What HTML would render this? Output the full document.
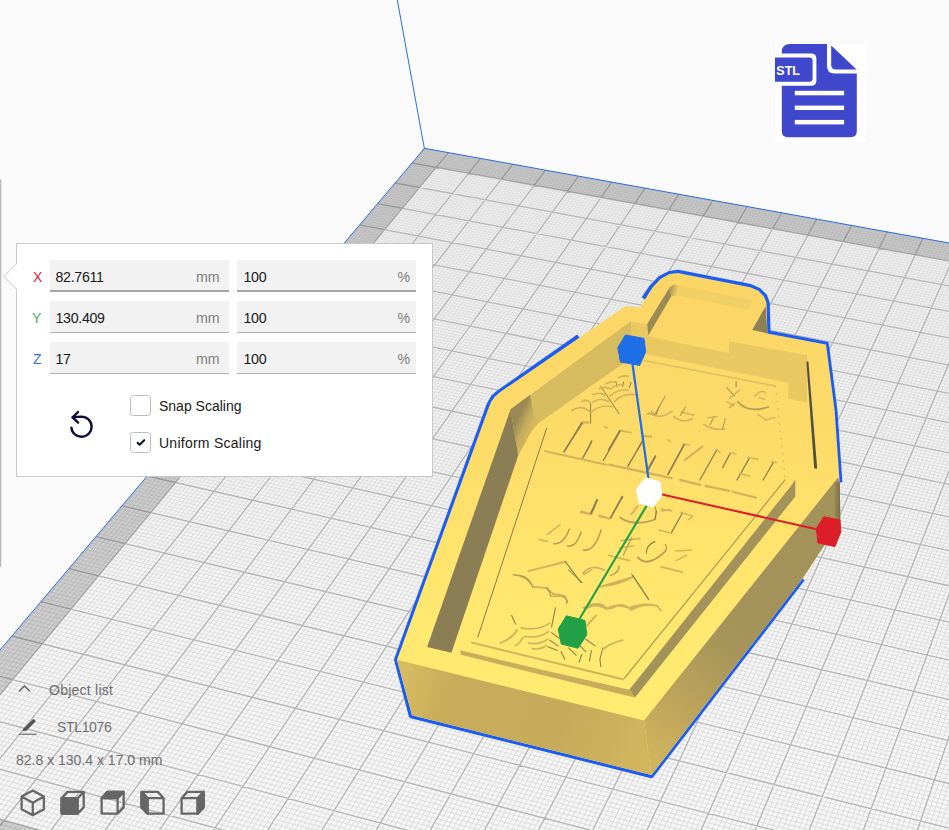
<!DOCTYPE html>
<html><head><meta charset="utf-8"><title>Cura</title>
<style>
html,body{margin:0;padding:0;}
body{width:949px;height:830px;overflow:hidden;background:#fafafa;position:relative;font-family:"Liberation Sans",sans-serif;}
#plate{position:absolute;left:0;top:0;}
.abs{position:absolute;}
#sliver{left:0;top:179px;width:1px;height:388px;background:#b9babc;border-top-right-radius:1px;}
#sliver2{left:1px;top:180px;width:1px;height:386px;background:#e6e7e8;}
#panel{left:16px;top:243px;width:415px;height:232px;background:#fff;border:1px solid #c8c8c8;}
#arrow{left:3px;top:263px;}
.inp{height:31px;width:179px;background:#f2f2f2;border-bottom:1px solid #b4b4b4;box-sizing:content-box;}
.inp.f{height:30px;border-bottom:2px solid #a6a6a6;}
.t{font-size:14.2px;letter-spacing:-0.3px;color:#191919;line-height:16px;white-space:nowrap;}
.u{font-size:14.2px;color:#7d7d7d;line-height:16px;white-space:nowrap;}
.ax{font-size:14px;line-height:16px;}
.cb{width:19px;height:19px;border:1px solid #bcbcbc;border-radius:3.5px;background:#fff;}
.lb{font-size:14px;color:#191919;line-height:16px;white-space:nowrap;}
.ol{font-size:14px;color:#6e6e6e;line-height:16px;white-space:nowrap;}

</style></head><body>
<svg id="plate" width="949" height="830" viewBox="0 0 949 830">
<defs><linearGradient id="gMin" gradientUnits="userSpaceOnUse" x1="0" y1="150" x2="0" y2="830"><stop offset="0" stop-color="#dadada"/><stop offset="1" stop-color="#cecece"/></linearGradient><linearGradient id="gPl" gradientUnits="userSpaceOnUse" x1="0" y1="150" x2="0" y2="720"><stop offset="0" stop-color="#ececec"/><stop offset="1" stop-color="#f6f6f6"/></linearGradient></defs>
<polygon points="424.5,148.3 1249.1,297.2 1041.9,1154.4 -141.8,817.7" fill="url(#gPl)"/>
<path d="M426.1 148.6L-5.2 659.1M423.7 149.2L954.0 245.1M429.3 149.1L-8.2 668.6M422.0 151.2L957.3 248.1M432.5 149.7L-7.7 673.9M420.4 153.1L956.3 250.3M435.6 150.3L-7.1 679.3M418.7 155.1L955.4 252.5M438.8 150.9L-6.6 684.7M417.1 157.0L954.4 254.8M442.0 151.4L-6.0 690.1M415.4 159.0L957.7 257.8M445.2 152.0L-5.5 695.5M413.7 161.0L956.7 260.1M451.6 153.2L-8.0 710.9M410.4 164.9L954.7 264.6M454.8 153.8L-7.5 716.5M408.7 166.9L958.0 267.6M458.0 154.3L-6.9 722.1M407.0 168.9L957.0 269.9M461.2 154.9L-6.4 727.7M405.3 170.9L956.1 272.2M464.5 155.5L-5.8 733.4M403.6 172.9L955.1 274.5M467.7 156.1L-5.3 739.0M401.9 174.9L954.1 276.8M470.9 156.7L-8.4 749.4M400.2 176.9L957.4 279.9M474.1 157.2L-7.9 755.1M398.5 179.0L956.4 282.2M477.3 157.8L-7.3 760.9M396.8 181.0L955.4 284.5M483.8 159.0L-6.2 772.7M393.4 185.0L957.8 290.0M487.0 159.6L-5.6 778.6M391.7 187.1L956.8 292.3M490.2 160.1L-5.0 784.5M389.9 189.1L955.8 294.7M493.5 160.7L-8.2 795.3M388.2 191.2L954.7 297.0M496.7 161.3L-7.7 801.3M386.4 193.2L958.1 300.2M500.0 161.9L-7.1 807.4M384.7 195.3L957.1 302.6M503.2 162.5L-6.5 813.5M382.9 197.4L956.1 305.0M506.4 163.1L-5.9 819.7M381.2 199.5L955.1 307.4M509.7 163.7L-5.4 825.9M379.4 201.5L954.1 309.8M516.2 164.8L-4.2 838.4M375.9 205.7L956.5 315.4M519.4 165.4L0.3 839.6M374.1 207.8L955.4 317.9M522.7 166.0L8.6 835.9M372.3 209.9L954.4 320.3M526.0 166.6L13.1 837.1M370.5 212.0L957.9 323.6M529.2 167.2L17.6 838.4M368.8 214.2L956.8 326.0M532.5 167.8L22.0 839.6M367.0 216.3L955.8 328.5M535.8 168.4L30.3 835.9M365.2 218.4L954.8 330.9M539.0 169.0L34.8 837.1M363.3 220.6L958.2 334.3M542.3 169.6L39.3 838.4M361.5 222.7L957.2 336.7M548.9 170.7L52.1 835.9M357.9 227.0L955.1 341.7M552.1 171.3L56.6 837.2M356.1 229.2L954.1 344.2M555.4 171.9L61.1 838.4M354.2 231.3L957.6 347.6M558.7 172.5L65.6 839.7M352.4 233.5L956.5 350.1M562.0 173.1L73.8 835.9M350.5 235.7L955.5 352.6M565.3 173.7L78.3 837.2M348.7 237.9L954.4 355.2M568.6 174.3L82.8 838.4M346.8 240.1L958.0 358.6M571.9 174.9L87.3 839.7M345.0 242.3L956.9 361.2M575.2 175.5L95.5 836.0M343.1 244.5L955.9 363.7M581.8 176.7L104.6 838.5M339.4 248.9L958.3 369.8M585.1 177.3L109.1 839.7M337.5 251.1L957.3 372.4M588.4 177.9L117.2 836.0M335.6 253.3L956.2 375.0M591.7 178.5L121.8 837.2M333.7 255.6L955.2 377.6M595.1 179.1L126.3 838.5M331.8 257.8L954.1 380.2M598.4 179.7L130.9 839.8M329.9 260.1L957.7 383.7M601.7 180.3L139.0 836.0M328.0 262.3L956.6 386.3M605.0 180.9L143.5 837.3M326.1 264.6L955.5 389.0M608.3 181.5L148.1 838.5M324.2 266.9L954.5 391.6M615.0 182.7L160.7 836.0M320.3 271.4L957.0 397.9M618.3 183.3L165.2 837.3M318.4 273.7L955.9 400.6M621.7 183.9L169.8 838.5M316.4 276.0L954.8 403.3M625.0 184.5L174.4 839.8M314.5 278.3L958.5 406.9M628.4 185.1L182.4 836.0M312.5 280.6L957.4 409.6M631.7 185.7L187.0 837.3M310.6 283.0L956.3 412.3M635.1 186.3L191.6 838.6M308.6 285.3L955.2 415.0M638.4 186.9L196.1 839.8M306.6 287.6L954.1 417.8M641.8 187.5L204.1 836.1M304.6 290.0L957.8 421.5M648.5 188.7L213.3 838.6M300.7 294.6L955.6 427.0M651.9 189.3L217.9 839.8M298.7 297.0L954.5 429.8M655.2 190.0L225.8 836.1M296.7 299.4L958.2 433.5M658.6 190.6L230.4 837.4M294.7 301.8L957.1 436.3M662.0 191.2L235.0 838.6M292.6 304.1L956.0 439.1M665.3 191.8L239.7 839.9M290.6 306.5L954.9 441.9M668.7 192.4L247.6 836.1M288.6 308.9L958.6 445.7M672.1 193.0L252.2 837.4M286.6 311.3L957.5 448.5M675.5 193.6L256.8 838.6M284.5 313.7L956.4 451.4M682.2 194.8L269.3 836.1M280.4 318.6L954.1 457.1M685.6 195.4L273.9 837.4M278.4 321.0L957.9 461.0M689.0 196.1L278.5 838.7M276.3 323.4L956.8 463.9M692.4 196.7L283.2 839.9M274.2 325.9L955.6 466.8M695.8 197.3L291.0 836.2M272.1 328.3L954.5 469.7M699.2 197.9L295.6 837.4M270.1 330.8L958.3 473.6M702.6 198.5L300.3 838.7M268.0 333.3L957.2 476.5M706.0 199.1L304.9 839.9M265.9 335.8L956.0 479.4M709.4 199.7L312.7 836.2M263.8 338.2L954.9 482.4M716.3 201.0L322.0 838.7M259.6 343.2L957.6 489.3M719.7 201.6L326.7 840.0M257.4 345.7L956.4 492.3M723.1 202.2L334.4 836.2M255.3 348.3L955.3 495.3M726.5 202.8L339.1 837.5M253.2 350.8L954.1 498.3M730.0 203.5L343.8 838.7M251.0 353.3L958.0 502.4M733.4 204.1L348.4 840.0M248.9 355.9L956.8 505.4M736.8 204.7L356.1 836.2M246.7 358.4L955.7 508.4M740.3 205.3L360.8 837.5M244.6 361.0L954.5 511.5M743.7 205.9L365.5 838.8M242.4 363.5L958.4 515.6M750.6 207.2L377.9 836.3M238.0 368.7L956.1 521.7M754.0 207.8L382.5 837.5M235.8 371.3L954.9 524.8M757.5 208.4L387.2 838.8M233.6 373.9L958.8 529.0M760.9 209.0L394.9 835.0M231.4 376.5L957.7 532.1M764.4 209.7L399.6 836.3M229.2 379.1L956.5 535.2M767.9 210.3L404.3 837.5M227.0 381.7L955.3 538.4M771.3 210.9L409.0 838.8M224.8 384.3L954.2 541.5M774.8 211.5L416.6 835.0M222.6 387.0L958.1 545.8M778.2 212.2L421.3 836.3M220.3 389.6L956.9 549.0M785.2 213.4L430.7 838.8M215.8 394.9L954.6 555.3M788.7 214.1L438.3 835.1M213.6 397.6L958.5 559.7M792.1 214.7L443.0 836.3M211.3 400.3L957.3 562.9M795.6 215.3L447.7 837.6M209.0 403.0L956.2 566.1M799.1 215.9L452.5 838.8M206.7 405.7L955.0 569.4M802.6 216.6L460.0 835.1M204.4 408.4L959.0 573.7M806.1 217.2L464.7 836.4M202.2 411.1L957.8 577.0M809.6 217.8L469.5 837.6M199.8 413.8L956.6 580.3M813.1 218.5L474.2 838.9M197.5 416.5L955.4 583.6M820.1 219.7L486.4 836.4M192.9 422.0L958.2 591.4M823.6 220.4L491.2 837.6M190.6 424.8L957.0 594.7M827.1 221.0L495.9 838.9M188.2 427.6L955.8 598.0M830.6 221.6L503.4 835.1M185.9 430.3L954.6 601.4M834.1 222.3L508.1 836.4M183.5 433.1L958.6 605.9M837.6 222.9L512.9 837.7M181.1 435.9L957.4 609.3M841.1 223.5L517.7 838.9M178.8 438.7L956.2 612.7M844.7 224.2L525.1 835.2M176.4 441.5L955.0 616.1M848.2 224.8L529.9 836.4M174.0 444.4L959.1 620.8M855.3 226.1L539.4 838.9M169.2 450.0L956.7 627.6M858.8 226.7L546.8 835.2M166.8 452.9L955.4 631.1M862.3 227.4L551.6 836.4M164.4 455.7L954.2 634.6M865.9 228.0L556.4 837.7M161.9 458.6L958.3 639.3M869.4 228.6L561.2 839.0M159.5 461.5L957.1 642.8M873.0 229.3L568.5 835.2M157.1 464.4L955.9 646.3M876.5 229.9L573.3 836.5M154.6 467.3L954.6 649.8M880.1 230.6L578.1 837.7M152.2 470.2L958.8 654.6M883.6 231.2L582.9 839.0M149.7 473.1L957.5 658.2M890.7 232.5L595.0 836.5M144.7 479.0L955.0 665.4M894.3 233.1L599.8 837.8M142.2 481.9L959.2 670.2M897.9 233.8L604.6 839.0M139.7 484.9L958.0 673.8M901.4 234.4L611.9 835.3M137.2 487.8L956.7 677.5M905.0 235.1L616.7 836.5M134.7 490.8L955.5 681.1M908.6 235.7L621.5 837.8M132.2 493.8L954.2 684.8M912.2 236.4L626.4 839.0M129.6 496.8L958.5 689.7M915.7 237.0L633.6 835.3M127.1 499.8L957.2 693.4M919.3 237.7L638.4 836.5M124.5 502.8L955.9 697.1M926.5 239.0L648.1 839.1M119.4 508.9L958.9 705.9M930.1 239.6L655.3 835.3M116.8 511.9L957.6 709.6M933.7 240.3L660.1 836.6M114.2 515.0L956.4 713.4M937.3 240.9L665.0 837.8M111.6 518.1L955.1 717.2M940.9 241.6L669.8 839.1M109.0 521.1L959.4 722.3M944.5 242.2L677.0 835.3M106.4 524.2L958.1 726.1M948.1 242.9L681.8 836.6M103.8 527.3L956.8 730.0M951.7 243.5L686.7 837.8M101.2 530.4L955.5 733.8M954.2 246.8L691.6 839.1M98.5 533.6L954.2 737.7M954.5 263.9L703.5 836.6M93.2 539.8L957.3 746.8M954.7 272.6L708.4 837.9M90.5 543.0L956.0 750.7M954.9 281.4L713.3 839.1M87.9 546.2L954.7 754.6M955.0 290.2L720.4 835.4M85.2 549.3L959.1 760.0M954.0 302.0L725.2 836.6M82.5 552.5L957.8 763.9M954.2 311.2L730.1 837.9M79.8 555.7L956.5 767.9M954.4 320.4L735.0 839.2M77.1 558.9L955.1 771.9M954.5 329.8L742.1 835.4M74.3 562.2L959.6 777.3M954.7 339.2L747.0 836.7M71.6 565.4L958.2 781.3M955.1 358.5L756.8 839.2M66.1 571.9L955.6 789.4M954.0 371.3L763.7 835.4M63.3 575.2L954.3 793.5M954.2 381.3L768.7 836.7M60.6 578.5L958.7 799.0M954.4 391.3L773.6 837.9M57.8 581.7L957.4 803.1M954.6 401.5L778.5 839.2M55.0 585.0L956.1 807.3M954.7 411.9L785.4 835.5M52.2 588.4L954.7 811.4M954.9 422.3L790.4 836.7M49.4 591.7L959.2 817.0M955.1 432.9L795.3 838.0M46.5 595.0L957.9 821.2M954.0 446.9L800.2 839.2M43.7 598.4L956.5 825.4M954.4 468.8L812.1 836.7M38.0 605.1L959.7 835.4M954.6 480.0L817.0 838.0M35.1 608.5L940.7 835.2M954.8 491.3L822.0 839.2M32.3 611.9L921.6 835.0M955.0 502.8L828.8 835.5M29.4 615.3L908.4 836.3M955.2 514.4L833.8 836.8M26.5 618.7L889.4 836.2M955.4 526.2L838.7 838.0M23.6 622.2L870.3 836.0M954.2 541.8L843.7 839.3M20.7 625.6L851.2 835.8M954.4 553.9L850.5 835.5M17.7 629.1L832.2 835.6M954.6 566.2L855.5 836.8M14.8 632.5L813.1 835.5M955.0 591.3L865.4 839.3M8.9 639.5L775.0 835.1M955.2 604.1L872.2 835.5M5.9 643.0L761.7 836.4M955.4 617.1L877.2 836.8M2.9 646.6L742.6 836.3M954.2 634.3L882.2 838.1M-0.1 650.1L723.6 836.1M954.4 647.7L887.2 839.3M-3.1 653.7L704.5 835.9M954.6 661.3L893.9 835.6M-6.1 657.2L685.5 835.7M954.8 675.1L898.9 836.8M-9.1 660.8L666.4 835.6M955.0 689.0L903.9 838.1M-7.3 665.6L647.4 835.4M955.2 703.2L908.9 839.3M-5.5 670.5L628.3 835.2M954.2 736.7L920.6 836.8M-6.8 679.0L595.9 836.4M954.4 751.6L925.6 838.1M-9.9 682.7L576.8 836.2M954.6 766.7L930.6 839.4M-8.1 687.6L557.8 836.0M954.8 782.0L937.3 835.6M-6.2 692.6L538.7 835.8M955.1 797.6L942.3 836.9M-9.3 696.3L519.7 835.7M955.3 813.4L947.3 838.1M-7.5 701.3L500.6 835.5M955.5 829.4L952.3 839.4M-5.7 706.4L481.6 835.3M-8.8 710.1L462.5 835.2M-7.0 715.2L449.0 836.5M-8.3 724.2L410.9 836.1M-6.4 729.3L391.9 835.9M-9.6 733.2L372.8 835.8M-7.7 738.4L353.8 835.6M-5.9 743.6L334.8 835.4M-9.0 747.5L315.7 835.3M-7.2 752.8L296.7 835.1M-5.3 758.1L283.1 836.4M-8.5 762.1L264.1 836.2M-9.8 771.4L226.0 835.9M-7.9 776.8L206.9 835.7M-6.0 782.3L187.9 835.5M-9.2 786.3L168.9 835.4M-7.3 791.8L149.8 835.2M-5.4 797.3L130.8 835.0M-8.7 801.4L117.1 836.3M-6.8 807.0L98.1 836.2M-10.0 811.2L79.0 836.0M-6.2 822.4L41.0 835.6M-9.5 826.6L22.0 835.5M-7.6 832.3L2.9 835.3" stroke="url(#gMin)" stroke-width="0.6" fill="none"/>
<path d="M448.4 152.6L-8.6 705.4M412.1 163.0L955.7 262.3M480.5 158.4L-6.7 766.8M395.1 183.0L954.4 286.8M512.9 164.2L-8.7 837.1M377.7 203.6L957.5 313.0M545.6 170.1L43.8 839.7M359.7 224.8L956.2 339.2M578.5 176.1L100.0 837.2M341.2 246.7L954.8 366.3M611.7 182.1L152.6 839.8M322.2 269.1L958.1 395.2M645.1 188.1L208.7 837.3M302.6 292.3L956.7 424.2M678.9 194.2L261.4 839.9M282.5 316.1L955.2 454.2M712.9 200.4L317.4 837.4M261.7 340.7L958.7 486.4M747.1 206.6L373.2 835.0M240.2 366.1L957.2 518.7M781.7 212.8L426.0 837.6M218.1 392.3L955.7 552.1M816.6 219.1L481.7 835.1M195.2 419.3L954.2 586.9M851.7 225.4L534.6 837.7M171.6 447.2L957.9 624.2M887.2 231.8L590.2 835.2M147.2 476.0L956.3 661.8M922.9 238.3L643.3 837.8M122.0 505.9L954.7 700.9M954.4 255.3L698.7 835.4M95.9 536.7L958.6 742.9M954.9 348.8L751.9 837.9M68.9 568.6L956.9 785.4M954.2 457.8L807.1 835.5M40.9 601.7L955.2 829.7M954.8 578.7L860.5 838.0M11.8 636.0L794.0 835.3M955.5 717.6L915.6 835.6M-8.6 674.1L609.3 835.1M-5.1 720.4L430.0 836.3M-6.6 767.4L245.0 836.1M-8.1 816.8L60.0 835.8" stroke="#b4b4b4" stroke-width="1.3" fill="none"/>
<path d="M424.5,148.3L1249.1,297.2L1041.9,1154.4L-141.8,817.7Z M436.2,167.4L1215.5,309.8L1009.1,1100.9L-83.3,795.8Z" fill="#000" fill-opacity="0.16" fill-rule="evenodd"/>
<polygon points="424.5,148.3 1249.1,297.2 1041.9,1154.4 -141.8,817.7" fill="none" stroke="#2a6ce2" stroke-width="1"/>
<path d="M397.3 0L424.4 148.6" stroke="#2a6ce2" stroke-width="1"/>
<defs>
<linearGradient id="gTop" gradientUnits="userSpaceOnUse" x1="0" y1="280" x2="0" y2="720"><stop offset="0" stop-color="#fbd566"/><stop offset="0.35" stop-color="#fddb69"/><stop offset="0.7" stop-color="#ffe76f"/><stop offset="1" stop-color="#ffec73"/></linearGradient>
<linearGradient id="gFront" gradientUnits="userSpaceOnUse" x1="400" y1="680" x2="650" y2="760"><stop offset="0" stop-color="#d8bc61"/><stop offset="0.2" stop-color="#c7ac5b"/><stop offset="0.65" stop-color="#c6ab5b"/><stop offset="1" stop-color="#d2b65f"/></linearGradient>
<linearGradient id="gRight" gradientUnits="userSpaceOnUse" x1="648" y1="750" x2="760" y2="605"><stop offset="0" stop-color="#cfb35e"/><stop offset="0.25" stop-color="#bfa65a"/><stop offset="0.7" stop-color="#a7955a"/><stop offset="1" stop-color="#a39259"/></linearGradient>
<linearGradient id="gTL" gradientUnits="userSpaceOnUse" x1="513" y1="428" x2="530" y2="436"><stop offset="0" stop-color="#9a8956"/><stop offset="0.5" stop-color="#c4aa5b"/><stop offset="1" stop-color="#d7bb5f"/></linearGradient>
<linearGradient id="gTabL" gradientUnits="userSpaceOnUse" x1="668" y1="290" x2="678" y2="292"><stop offset="0" stop-color="#9c8a55"/><stop offset="1" stop-color="#f3d166"/></linearGradient>
<linearGradient id="gEdge" gradientUnits="userSpaceOnUse" x1="833" y1="0" x2="840.5" y2="0"><stop offset="0" stop-color="#a39259"/><stop offset="1" stop-color="#776c46"/></linearGradient>
</defs>
<polyline points="578.5,336.2 500.0,391.2 493.0,397.0 489.0,404.0 487.6,408.0 396.2,659.7 411.0,716.0 651.5,776.0 803.0,579.0" fill="none" stroke="#1a5cf5" stroke-width="4.4" stroke-linejoin="round"/>
<polyline points="643.5,298.5 651.5,286.8 660.0,278.0 669.5,273.2 678.0,272.0 750.5,286.2 759.0,290.0 765.0,296.0 767.5,303.0 768.4,332.6 826.6,343.8 835.2,410.0 840.2,482.5" fill="none" stroke="#1a5cf5" stroke-width="4.4" stroke-linejoin="round"/>
<polygon points="397.0,659.7 488.8,407.5 491.0,402.0 495.0,396.5 500.6,391.7 625.5,306.1 640.1,307.7 644.5,300.1 652.5,287.5 660.5,279.0 669.4,274.1 677.7,272.9 750.3,287.2 758.5,290.8 764.0,296.5 766.5,303.0 767.4,333.4 826.0,344.6 834.6,410.0 839.6,481.8 840.3,521.0 802.3,579.1 651.5,775.0 412.0,715.3" fill="url(#gTop)" />
<polygon points="397.0,659.7 644.0,720.5 651.5,775.0 412.0,715.3" fill="url(#gFront)" />
<polygon points="644.0,720.5 838.0,477.5 839.8,481.8 840.3,521.0 802.3,579.1 651.5,775.0" fill="url(#gRight)" />
<polygon points="834.0,482.5 839.8,481.8 840.3,521.0 836.5,527.0 834.5,515.0" fill="url(#gEdge)" />
<polygon points="765.6,306.3 752.2,329.9 767.4,333.4" fill="#8f8053" />
<polygon points="510.6,409.3 630.9,321.3 632.0,360.0 620.6,365.2 538.4,423.2 531.3,431.8 518.2,455.6" fill="#d7bb5f" />
<polygon points="510.6,409.3 530.0,395.0 536.0,425.0 531.3,431.8 518.2,455.6" fill="url(#gTL)" />
<polygon points="510.6,409.3 518.2,455.6 451.4,652.7 427.1,646.9" fill="#8b7e54" />
<polygon points="630.9,321.3 647.9,324.5 647.9,336.3 729.1,353.2 729.1,341.2 807.0,355.3 807.0,402.7 788.1,398.5 788.1,382.7 646.1,354.1 632.0,352.0" fill="#e9c862" />
<polygon points="647.2,324.0 669.4,287.7 672.1,285.5 671.6,295.8 648.3,335.4" fill="#9c8a55" />
<polygon points="669.4,287.7 674.0,284.6 752.0,300.3 749.6,306.5 747.0,309.5 678.0,295.5 671.6,296.0" fill="#f0cf65" />
<polygon points="669.4,287.7 674.0,284.6 679.0,285.6 678.0,295.5 671.6,296.0" fill="url(#gTabL)" />
<polygon points="806.4,361.6 808.4,361.6 817.2,468.6 814.2,468.6" fill="#54503f" />
<polygon points="795.3,479.6 795.3,496.5 635.0,697.4 629.3,689.8 791.9,484.7" fill="#a39259" />
<polygon points="460.2,650.3 530.0,667.1 629.3,689.8 635.0,697.4 629.3,696.2 530.0,672.1 460.9,654.8" fill="#c9ad5b" />
<polygon points="471.0,641.5 624.2,678.5 623.5,680.6 471.5,643.6" fill="#d0b45e" />
<polyline points="546.8,427.8 477.6,637.7" fill="none" stroke="#8a7a4a" stroke-width="1" />
<polyline points="643.6,360.5 775.4,385.9" fill="none" stroke="#dcc062" stroke-width="1.6" />
<polyline points="775.4,385.9 785.2,479.6" fill="none" stroke="#c9ad5b" stroke-width="1" stroke-dasharray="1.5 6"/>
<polyline points="785.2,479.6 624.2,678.5" fill="none" stroke="#b39c55" stroke-width="1.2" />
<path d="M590.6 402.9L590.6 423.1M600.7 386.4L619.0 413.6M615.9 381.4L617.1 386.4M623.5 382.0L622.8 386.4M631.0 382.6L629.2 387.7M651.3 411.7L655.7 415.5L660.0 405.4M736.1 381.7L736.1 386.7" fill="none" stroke="#8f7f50" stroke-width="1" stroke-linecap="round"/>
<path d="M571.6 410.5Q581.7 404.1 589.9 411.7M591.8 411.7Q600.7 404.1 612.1 406.7M581.7 401.6Q586.8 398.5 590.6 402.9M592.5 402.2Q599.4 397.2 608.9 401.6M614.6 401.6Q622.2 392.8 636.1 394.7M593.1 394.7Q599.4 391.5 605.8 395.3M610.2 395.9Q617.1 389.0 628.5 390.2M599.4 389.0Q604.5 385.8 610.8 389.0M610.8 389.0Q615.9 383.9 623.5 384.5M605.8 383.9Q610.8 380.7 615.9 382.6M618.4 377.6Q623.5 375.1 628.5 376.3M581.7 422.1L588.1 423.1M619.7 430.4L627.3 432.0M643.7 436.4L651.3 436.4M648.4 412.9Q660.2 420.5 672.0 411.2M673.7 416.3Q682.2 423.8 692.3 418.8M704.1 424.7Q714.2 430.6 724.3 428.9M580.6 512.4L590.7 514.4M599.1 516.5L609.3 518.7M581.1 511.1L591.7 514.2M599.0 515.3L610.6 518.5M659.1 530.0L671.7 533.2M621.2 540.6L640.1 538.5M619.1 548.0L633.8 545.8M608.5 555.3L629.6 560.6M532.6 586.9L547.4 588.0M657.0 605.9L660.8 610.5" fill="none" stroke="#d2b35d" stroke-width="1.6" stroke-linecap="round"/>
<path d="M581.7 422.5L565.3 450.0M619.7 430.7L608.3 450.0M591.8 440.8L587.4 450.0M642.4 440.8L637.4 450.0M655.2 455.9L646.7 471.1M683.8 444.9L667.8 474.4M716.7 450.0L699.9 480.0M730.2 453.4L722.6 467.7M749.6 457.6L737.0 480.0M773.2 462.6L763.1 480.0M597.5 500.1L591.6 513.6M622.7 496.7L610.9 517.8M596.9 499.5L590.6 513.2M622.2 496.3L610.6 517.4M682.3 513.2L671.7 532.1" fill="none" stroke="#8f7f50" stroke-width="1.3" stroke-linecap="round"/>
<path d="M647.5 414.3L653.8 413.0M754.7 396.0Q760.6 389.3 765.6 392.6M731.1 452.5L736.1 454.2M680.2 512.1L692.8 516.3L688.6 519.5" fill="none" stroke="#d2b35d" stroke-width="1.4" stroke-linecap="round"/>
<path d="M665.3 396.0L655.2 413.7M654.9 519.5Q657.4 512.1 654.9 506.9M665.4 551.1Q667.5 547.3 665.4 544.4M547.4 588.0Q551.6 595.4 560.0 594.3M568.6 570.0L581.9 582.3" fill="none" stroke="#b89f57" stroke-width="1.3" stroke-linecap="round"/>
<path d="M681.3 412.0L694.0 415.4M707.5 417.9L717.6 416.3M726.8 401.9L733.6 405.3M758.0 414.6L764.8 418.8M764.8 420.1L774.9 417.4M604.2 426.7L607.6 428.1M668.3 439.9L670.8 441.9" fill="none" stroke="#d2b35d" stroke-width="1.3" stroke-linecap="round"/>
<path d="M685.5 407.0L680.5 415.4M725.2 418.8L722.6 428.9M714.2 416.3L710.0 424.7M726.8 387.6L734.4 396.0M631.7 537.4L623.3 555.3M564.3 595.4Q567.6 599.6 566.4 603.8" fill="none" stroke="#b89f57" stroke-width="1.2" stroke-linecap="round"/>
<path d="M739.5 390.1L729.4 398.5M683.0 444.1L689.7 444.9M715.9 449.1L720.1 452.5M747.9 457.6L758.0 459.3M771.5 461.8L776.6 462.6M739.5 473.6L749.6 476.1M582.3 422.5L589.0 421.7M621.1 431.0L631.2 432.6M644.7 436.0L651.4 436.9M661.5 511.1L670.0 509.4M661.2 509.0L671.7 511.1M539.0 539.5L547.4 541.6M547.4 534.3L560.0 524.8M676.0 551.1L691.8 550.1M686.5 555.3L676.0 560.6M552.7 594.3L564.3 595.4M532.6 586.7L545.9 588.0M550.6 596.2L562.9 596.6M583.8 574.7L591.4 570.0" fill="none" stroke="#d2b35d" stroke-width="1.5" stroke-linecap="round"/>
<path d="M729.4 407.8L734.4 403.6" fill="none" stroke="#b89f57" stroke-width="1.1" stroke-linecap="round"/>
<path d="M737.8 401.9Q747.9 413.7 768.2 407.0M620.1 517.4Q633.8 526.9 654.9 519.5" fill="none" stroke="#b89f57" stroke-width="1.8" stroke-linecap="round"/>
<path d="M758.9 397.7L764.8 399.4" fill="none" stroke="#d2b35d" stroke-width="1.2" stroke-linecap="round"/>
<path d="M702.4 446.6L684.7 460.1M528.4 571.1L565.3 561.7M600.1 586.9L631.7 577.5M587.4 608.0Q595.9 602.3 606.4 609.1Q615.9 602.3 629.6 608.0Q642.2 602.3 657.0 605.9M585.7 626.9L596.1 615.5M583.8 607.9Q593.3 601.9 602.8 605.1M602.8 605.1Q608.5 610.8 614.2 607.0M614.2 607.0Q621.7 601.9 631.2 609.8M631.2 609.8Q640.7 604.1 650.0 605.1M602.8 586.1Q621.7 583.7 633.1 576.6" fill="none" stroke="#d2b35d" stroke-width="2" stroke-linecap="round"/>
<path d="M582.3 423.4L563.7 452.0M591.6 441.9L582.3 458.8M620.2 431.0L603.4 460.5M642.1 441.9L627.8 466.4M655.6 456.3L648.0 470.6M684.3 444.5L668.3 474.0" fill="none" stroke="#8f7f50" stroke-width="1.4" stroke-linecap="round"/>
<path d="M545.2 451.2L606.7 464.7M609.3 464.7L671.7 478.2M680.1 479.9L700.3 484.9M705.4 485.8L729.0 490.8M732.4 491.7L756.0 497.6" fill="none" stroke="#d2b35d" stroke-width="2.2" stroke-linecap="round"/>
<path d="M637.9 506.0L631.2 514.4M661.2 566.9L682.3 572.2M583.2 573.2Q591.7 563.3 604.3 570.1" fill="none" stroke="#d2b35d" stroke-width="1.8" stroke-linecap="round"/>
<path d="M656.5 511.1L654.8 519.5M646.4 553.2Q646.0 545.2 654.9 541.6" fill="none" stroke="#8f7f50" stroke-width="1.2" stroke-linecap="round"/>
<path d="M553.7 543.7Q563.2 545.2 569.5 529.0M567.4 545.8Q575.8 548.4 581.1 532.1M583.2 550.1Q594.8 551.5 601.1 530.0M520.0 575.4Q528.9 576.4 532.6 586.9M610.6 575.4Q619.1 572.6 619.1 565.9M513.6 574.7Q526.9 575.7 532.6 586.1M545.9 588.0Q550.0 590.9 550.6 595.6" fill="none" stroke="#b89f57" stroke-width="1.5" stroke-linecap="round"/>
<path d="M638.0 557.4Q647.5 568.4 665.4 551.1" fill="none" stroke="#b89f57" stroke-width="2" stroke-linecap="round"/>
<path d="M565.3 561.7L581.1 582.7M631.7 574.3L648.6 599.6M511.7 615.5L515.5 624.1M555.4 607.9L551.6 626.9M551.6 632.6L559.2 638.3M549.7 640.2L558.2 645.9M547.8 646.8L557.3 650.6M561.0 651.6L564.8 659.2M568.6 647.8L576.2 655.4M580.0 645.9L585.7 651.6M581.9 654.4L579.1 662.0M591.4 650.6L589.5 661.0M602.8 647.8L599.9 659.2L600.9 666.7M585.7 639.2L595.2 645.9M633.1 575.7L648.3 598.5" fill="none" stroke="#8f7f50" stroke-width="1.1" stroke-linecap="round"/>
<path d="M562.9 596.6Q567.1 598.5 567.7 602.2" fill="none" stroke="#b89f57" stroke-width="1.4" stroke-linecap="round"/>
<path d="M521.2 627.9Q538.3 631.1 549.7 623.1M525.0 636.4Q538.3 638.7 548.7 631.6M528.8 643.0Q538.3 645.3 547.8 639.2M532.6 648.7Q540.2 650.0 545.9 645.9M500.3 643.0Q512.1 638.7 517.4 629.7M515.5 645.9Q520.5 642.5 523.1 637.3M602.8 649.7Q610.4 643.0 622.7 640.2" fill="none" stroke="#d2b35d" stroke-width="1.7" stroke-linecap="round"/>
<polyline points="632.5,364.0 648.5,479.0" fill="none" stroke="#1e6ee8" stroke-width="2.2" />
<polyline points="660.0,494.0 818.0,529.5" fill="none" stroke="#dc1e28" stroke-width="2.0" />
<polyline points="647.0,505.0 579.5,619.0" fill="none" stroke="#21a045" stroke-width="2.1" />
<polygon points="625.4,335.0 644.0,338.4 645.6,351.9 639.7,365.4 620.4,362.0 617.8,347.7" fill="#1e6ee8" stroke="#1e6ee8" stroke-width="1" stroke-linejoin="round"/>
<polygon points="646.0,477.8 659.9,482.0 661.8,495.9 653.0,507.0 639.1,502.9 636.3,488.9" fill="#ffffff" stroke="#fff" stroke-width="1" stroke-linejoin="round"/>
<polygon points="823.9,516.7 840.0,520.1 840.8,531.9 834.9,546.6 818.0,542.9 816.4,528.5" fill="#dc1e28" stroke="#dc1e28" stroke-width="1" stroke-linejoin="round"/>
<polygon points="566.4,615.8 584.9,620.4 586.8,634.8 578.0,648.2 561.3,644.0 558.2,629.0" fill="#21a045" stroke="#21a045" stroke-width="1" stroke-linejoin="round"/>
</svg>
<div class="abs" id="sliver"></div><div class="abs" id="sliver2"></div>
<div class="abs" id="panel"></div>
<svg class="abs" id="arrow" width="15" height="27" viewBox="0 0 15 27"><path d="M14 0.5L0.8 13.5L14 26.5" fill="#fff" stroke="#c8c8c8" stroke-width="1"/><rect x="13.5" y="1" width="1.5" height="25" fill="#fff"/></svg>

<div class="abs inp f" style="left:50px;top:260px"></div>
<div class="abs inp f" style="left:237px;top:260px"></div>
<div class="abs inp" style="left:50px;top:301px"></div>
<div class="abs inp" style="left:237px;top:301px"></div>
<div class="abs inp" style="left:50px;top:342px"></div>
<div class="abs inp" style="left:237px;top:342px"></div>

<div class="abs ax" id="ax" style="left:33px;top:269px;color:#e0243a">X</div>
<div class="abs ax" id="ay" style="left:32px;top:310px;color:#4cae4f">Y</div>
<div class="abs ax" id="az" style="left:33px;top:351px;color:#2f72d8">Z</div>

<div class="abs t" id="t1" style="left:55.5px;top:269px">82.7611</div>
<div class="abs t" id="t2" style="left:55.5px;top:310px">130.409</div>
<div class="abs t" id="t3" style="left:55.5px;top:351px">17</div>
<div class="abs u" id="u1" style="left:196px;top:269px">mm</div>
<div class="abs u" id="u2" style="left:196px;top:310px">mm</div>
<div class="abs u" id="u3" style="left:196px;top:351px">mm</div>
<div class="abs t" id="p1" style="left:243.5px;top:269px">100</div>
<div class="abs t" id="p2" style="left:243.5px;top:310px">100</div>
<div class="abs t" id="p3" style="left:243.5px;top:351px">100</div>
<div class="abs u" id="q1" style="left:397.5px;top:269px">%</div>
<div class="abs u" id="q2" style="left:397.5px;top:310px">%</div>
<div class="abs u" id="q3" style="left:397.5px;top:351px">%</div>

<svg class="abs" id="reset" style="left:60px;top:405px" width="44" height="40" viewBox="60 405 44 40"><g fill="none" stroke="#0d0a3e" stroke-width="2.4" stroke-linecap="round" stroke-linejoin="round"><path d="M78.1 412L72.6 417.3L78.1 422.6"/><path d="M72.8 417.3L81.45 416.6A10.1 10.1 0 1 1 71.4 427.6"/></g></svg>

<div class="abs cb" style="left:130px;top:395px"></div>
<div class="abs cb" style="left:130px;top:432px"></div>
<svg class="abs" style="left:130px;top:432px" width="21" height="21" viewBox="130 432 21 21"><path d="M137.6 442.8L139.6 444.8L144.2 440.2" fill="none" stroke="#0c1826" stroke-width="2.1" stroke-linecap="round" stroke-linejoin="round"/></svg>
<div class="abs lb" id="l1" style="left:159px;top:398px">Snap Scaling</div>
<div class="abs lb" id="l2" style="letter-spacing:0.25px;left:159px;top:435px">Uniform Scaling</div>

<svg class="abs" style="left:16px;top:682px" width="18" height="14" viewBox="0 0 18 14"><path d="M3 9.5L8.5 4L14 9.5" fill="none" stroke="#6e6e6e" stroke-width="1.6"/></svg>
<div class="abs ol" id="o1" style="letter-spacing:0.25px;left:49px;top:682px">Object list</div>
<svg class="abs" style="left:16px;top:712px" width="24" height="26" viewBox="0 0 24 26"><path d="M8.6 18L18.6 8" stroke="#555" stroke-width="3.4" fill="none"/><path d="M6.2 19.6L8.4 15.6L10.8 18Z" fill="#555"/><rect x="3" y="21.6" width="17.6" height="1.3" fill="#777"/></svg>
<div class="abs ol" id="o2" style="letter-spacing:-0.35px;left:57px;top:719px">STL1076</div>
<div class="abs ol" id="o3" style="left:16px;top:752px">82.8 x 130.4 x 17.0 mm</div>
<svg class="abs" style="left:0;top:780px" width="240" height="50" viewBox="0 780 240 50">
<g fill="none" stroke="#666" stroke-width="2.3" stroke-linejoin="round" stroke-linecap="round">
<path d="M32.8 790.6L43.9 796.6V809.2L32.8 815.3L21.6 809.2V796.6ZM21.6 796.6L32.8 802.8L43.9 796.6M32.8 802.8V815.3"/>
<g id="cube">
<path d="M61.6 798.2L67.4 791.9H83.7L77.6 798.2ZM77.6 798.2L83.7 791.9V807.4L77.6 813.6M61.6 798.2H77.6V813.6H61.6Z"/>
</g>
<use href="#cube" x="40"/>
<use href="#cube" x="120"/>
<g transform="translate(305.2,0) scale(-1,1)"><use href="#cube" x="80"/><path d="M157.6 798.2L163.7 791.9V807.4L157.6 813.6Z" fill="#666"/></g>
<path d="M61.6 798.2H77.6V813.6H61.6Z" fill="#666"/>
<path d="M101.6 798.2L107.4 791.9H123.7L117.6 798.2Z" fill="#666"/>
<path d="M197.6 798.2L203.7 791.9V807.4L197.6 813.6Z" fill="#666"/>
</g></svg>
<svg class="abs" style="left:770px;top:40px" width="100" height="106" viewBox="770 40 100 106">
<rect x="775" y="44" width="91" height="98" fill="#fff"/>
<path d="M790 44H827V66Q827 73.6 834.6 73.6H856.8V131Q856.8 137.2 850.6 137.2H788Q781.8 137.2 781.8 131V52Q781.8 44 790 44Z" fill="#3f48cc"/>
<path d="M831.2 45.5L856.6 69.6H836Q831.2 69.6 831.2 64.8Z" fill="#3f48cc"/>
<path d="M775 53.4H811Q816.4 53.4 816.4 58.8V80.4Q816.4 85.8 811 85.8H775Z" fill="#fff"/>
<path d="M775 57.4H809.5Q812.6 57.4 812.6 60.5V78.6Q812.6 81.7 809.5 81.7H775Z" fill="#3f48cc"/>
<rect x="794.8" y="90.8" width="49.3" height="4.5" fill="#fff"/>
<rect x="794.8" y="105.6" width="49.3" height="4.4" fill="#fff"/>
<rect x="794.8" y="119.9" width="49.3" height="4.5" fill="#fff"/>
<text x="776.3" y="74.8" font-family="Liberation Sans, sans-serif" font-weight="bold" font-size="13.2" fill="#fff" textLength="23.6" lengthAdjust="spacingAndGlyphs">STL</text>
</svg>

</body></html>
